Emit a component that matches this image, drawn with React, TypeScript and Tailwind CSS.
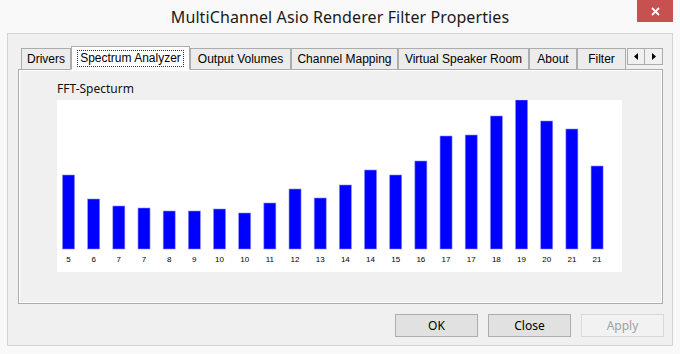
import * as React from "react";

const tabs = [
  { label: "Drivers", w: 50 },
  { label: "Spectrum Analyzer", w: 119, active: true },
  { label: "Output Volumes", w: 101 },
  { label: "Channel Mapping", w: 107 },
  { label: "Virtual Speaker Room", w: 131 },
  { label: "About", w: 48 },
  { label: "Filter", w: 49 },
];

// bar tops measured from chart top, labels under each bar
const bars = [
  { top: 75, label: "5" },
  { top: 99, label: "6" },
  { top: 106, label: "7" },
  { top: 108, label: "7" },
  { top: 111, label: "8" },
  { top: 111, label: "9" },
  { top: 109, label: "10" },
  { top: 113, label: "10" },
  { top: 103, label: "11" },
  { top: 89, label: "12" },
  { top: 98, label: "13" },
  { top: 85, label: "14" },
  { top: 70, label: "14" },
  { top: 75, label: "15" },
  { top: 61, label: "16" },
  { top: 36, label: "17" },
  { top: 35, label: "17" },
  { top: 16, label: "18" },
  { top: 0, label: "19" },
  { top: 21, label: "20" },
  { top: 29, label: "21" },
  { top: 66, label: "21" },
];

function SpectrumChart() {
  const base = 149;
  return (
    <svg width={565} height={172} className="block bg-white">
      {bars.map((b, i) => {
        const cx = 11.5 + i * 25.17;
        return (
          <g key={i}>
            <rect x={cx - 6} y={b.top} width={12} height={base - b.top} fill="#0000ff" stroke="#8a8aff" strokeWidth={0.6} />
            <text x={cx} y={162} textAnchor="middle" fontSize="8" fontFamily="'Liberation Sans', Arial, sans-serif" fill="#000">
              {b.label}
            </text>
          </g>
        );
      })}
    </svg>
  );
}

function Arrow({ dir }: { dir: "left" | "right" }) {
  return (
    <svg width="4" height="7" viewBox="0 0 4 7">
      {dir === "left" ? <polygon points="4,0 4,7 0,3.5" fill="#000" /> : <polygon points="0,0 0,7 4,3.5" fill="#000" />}
    </svg>
  );
}

export default function App() {
  return (
    <div className="w-[680px] h-[354px] bg-[#f9f9f9] flex flex-col font-['Liberation_Sans',Arial,sans-serif] text-black overflow-hidden">
      {/* title bar */}
      <div className="relative h-[33px] flex items-center justify-center">
        <span className="text-[16px] text-[#1a1a1a] font-['Noto_Sans',sans-serif] tracking-[0.1px]">
          MultiChannel Asio Renderer Filter Properties
        </span>
        <div className="absolute right-[7px] top-0 w-[36px] h-[22px] bg-[#c75050] flex items-center justify-center">
          <svg width="9" height="9" viewBox="0 0 9 9">
            <path d="M1 1 L8 8 M8 1 L1 8" stroke="#fff" strokeWidth="1.8" />
          </svg>
        </div>
      </div>

      {/* client area */}
      <div className="mx-[7px] h-[313px] border border-[#d4d4d4] bg-[#f0f0f0] flex flex-col">
        <div className="pl-[10px] pr-[8px] pt-[12px]">
          {/* tab strip */}
          <div className="flex items-end h-[23px] pl-[3px] text-[12px]">
            {tabs.map((t) =>
              t.active ? (
                <div
                  key={t.label}
                  style={{ width: t.w }}
                  className="relative z-10 h-[24px] -mb-px bg-white border border-[#acacac] border-b-white flex items-center justify-center"
                >
                  <span className="border border-dotted border-[#333] px-[2px] leading-[15px]">{t.label}</span>
                </div>
              ) : (
                <div
                  key={t.label}
                  style={{ width: t.w }}
                  className="h-[21px] bg-[#ececec] border border-[#acacac] border-b-0 flex items-center justify-center"
                >
                  {t.label}
                </div>
              )
            )}
            <div className="flex ml-px self-start mt-[2px]">
              <div className="w-[18px] h-[17px] border border-[#acacac] bg-[#f0f0f0] flex items-center justify-center">
                <Arrow dir="left" />
              </div>
              <div className="w-[18px] h-[17px] border border-l-0 border-[#acacac] bg-[#f0f0f0] flex items-center justify-center">
                <Arrow dir="right" />
              </div>
            </div>
          </div>

          {/* tab panel */}
          <div className="w-[645px] h-[235px] border border-[#acacac] bg-[#f0f0f0] shadow-[inset_1px_1px_0_#fff,inset_-1px_-1px_0_#fff] pl-[38px] pt-[11px]">
            <div className="text-[12px] leading-[16px] h-[19px] font-['Noto_Sans',sans-serif] text-[#111]">FFT-Specturm</div>
            <SpectrumChart />
          </div>
        </div>

        {/* buttons */}
        <div className="flex justify-end gap-[10px] pr-[8px] mt-[10px] text-[12px] font-['Noto_Sans',sans-serif]">
          <div className="w-[83px] h-[23px] bg-[#e1e1e1] border border-[#adadad] flex items-center justify-center">OK</div>
          <div className="w-[83px] h-[23px] bg-[#e1e1e1] border border-[#adadad] flex items-center justify-center">Close</div>
          <div className="w-[83px] h-[23px] bg-[#f2f2f2] border border-[#d9d9d9] text-[#a0a0a0] flex items-center justify-center">Apply</div>
        </div>
      </div>
    </div>
  );
}
